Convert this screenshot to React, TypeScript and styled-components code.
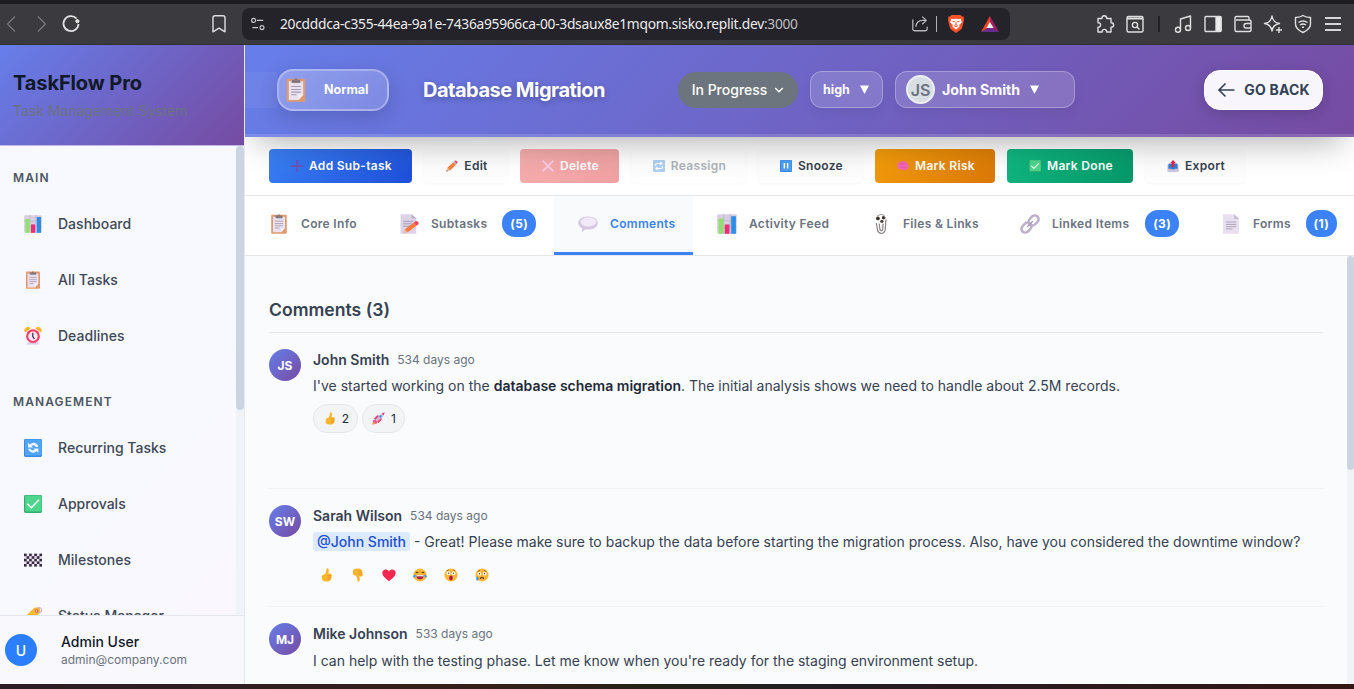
import React from "react";
import styled, { createGlobalStyle, css } from "styled-components";

const GlobalStyle = createGlobalStyle`
  * { box-sizing: border-box; }
  body { margin: 0; overflow: hidden; background: #fff; font-family: Inter, "Liberation Sans", sans-serif; }
  button { font-family: inherit; margin: 0; cursor: pointer; }
  svg { display: block; flex: none; }
  h1, h2, p { margin: 0; }
`;

/* ---------- Pictograms ---------- */

const glyphs: Record<string, React.ReactNode> = {
  clipboard: (
    <>
      <rect x="2" y="0.6" width="14" height="17.2" rx="1" fill="#e09a6c" />
      <path d="M3.6 2.4h10.8v10.2l-3.6 3.9H3.6z" fill="#e9e1f0" />
      <path d="M10.8 16.5v-3.9h3.6z" fill="#f7f2fb" />
      <path d="M5.4 6.4h7.2M5.4 8.6h7.2M5.4 10.6h7.2M5.4 12.6h4" stroke="#a89db3" strokeWidth="0.8" />
      <path d="M5.8 1.4h1.8a1.5 1.5 0 0 1 2.8 0h1.8v2.4H5.8z" fill="#83797f" />
    </>
  ),
  chart: (
    <>
      <rect x="0.2" y="0.2" width="17.6" height="17.6" rx="1" fill="#d9cfe1" />
      <path d="M6 0v18M12 0v18M0 6h18M0 12h18" stroke="#b7adc1" strokeWidth="0.6" />
      <rect x="1.4" y="4" width="4.2" height="13.8" fill="#8fe36c" />
      <rect x="7" y="9.4" width="4.2" height="8.4" fill="#ec2f74" />
      <rect x="12.8" y="2" width="4.2" height="15.8" fill="#2a8de8" />
    </>
  ),
  clock: (
    <>
      <path d="M1 5.4A3 3 0 0 1 6.6 1.6zM17 5.4a3 3 0 0 0-5.6-3.8z" fill="#fbb32c" />
      <path d="M2.6 17.6l2-3.200h8.800l2 3.200z" fill="#d9cbe9" />
      <circle cx="9" cy="9.200" r="6.900" fill="#f8406b" />
      <circle cx="9" cy="9.200" r="4.700" fill="#f8e8f6" />
      <path d="M8.800 5.800v3.800l1.600 2.200" fill="none" stroke="#35263f" strokeWidth="1.200" />
    </>
  ),
  recurring: (
    <>
      <rect width="18" height="18" rx="1.4" fill="#3b88e6" />
      <rect x="1" y="0.4" width="16.6" height="16" rx="1" fill="#51a5f6" />
      <path d="M4 3.800l1.800 1.600Q9 2.400 12.600 4.800q1.600 1.400 1.600 3.200h-2.400Q11 5.200 7.600 6.800L9 8.400H4z" fill="#eef5ff" />
      <path d="M14.400 13.800l-1.800-1.600Q9.400 15 5.800 12.600 4.400 11.400 4.200 9.800h2.400q1 2.400 4.200 1L9.400 9.400h5z" fill="#eef5ff" />
    </>
  ),
  repeat: (
    <>
      <rect width="18" height="18" rx="1.4" fill="#3b8fe8" />
      <path d="M4 9V7q0-1.8 1.8-1.8h7M11 3l2.6 2.2L11 7.4M14 9v2q0 1.8-1.8 1.8h-7M7 10.6L4.4 12.8 7 15" fill="none" stroke="#fff" strokeWidth="1.6" />
    </>
  ),
  check: (
    <>
      <rect width="18" height="18" rx="1.4" fill="#35ad70" />
      <rect x="1.2" y="0.4" width="16.4" height="16.2" rx="1" fill="#4fd58c" />
      <path d="M3.8 9.2l3.6 3.5 7.2-7.5" fill="none" stroke="#f1fff5" strokeWidth="1.6" strokeLinecap="round" />
    </>
  ),
  checkered: (
    <>
      <rect y="2.6" width="18" height="13" fill="#eee3f3" />
      {[0, 1, 2, 3, 4].map((r) =>
        [0, 1, 2, 3, 4, 5, 6].map((c) =>
          (r + c) % 2 ? null : <rect key={`${r}${c}`} x={c * 2.57} y={2.6 + r * 2.6} width="2.6" height="2.6" fill="#332b3c" />
        )
      )}
    </>
  ),
  tag: (
    <>
      <path d="M1.6 9.2L9.4 1.6q1-1 2.4-1h3q1.4 0 1.4 1.4v3.6L7.4 14.8z" fill="#fdbb2f" />
      <circle cx="12.6" cy="4" r="1.8" fill="#ef4d65" />
      <circle cx="12.4" cy="4" r="0.7" fill="#fff" />
      <path d="M13.2 1.2q4.4-1.4 4.6 1.6t-3.4 3" fill="none" stroke="#b9a6cb" strokeWidth="1" />
    </>
  ),
  plus: <path d="M9 0v18M0 9h18" stroke="#7a4bab" strokeWidth="2.200" />,
  cross: <path d="M.8.8l16.400 16.400M17.200.8L.8 17.200" stroke="#f98fd0" strokeWidth="2.400" />,
  pencil: (
    <>
      <path d="M0.6 17.4l1.6-5.6 4 4z" fill="#e8b795" />
      <path d="M2.2 11.8l8.6-8.6 4 4-8.6 8.6z" fill="#fb7f3a" />
      <path d="M10.8 3.2l1.6-1.6 4 4-1.6 1.6z" fill="#b6adc0" />
      <path d="M12.4 1.6q2-2 3.9.1t.1 3.9z" fill="#ef4658" />
      <path d="M0.6 17.4l.6-2 1.4 1.4z" fill="#43313c" />
    </>
  ),
  pause: (
    <>
      <rect width="18" height="18" rx="1.4" fill="#3384e0" />
      <rect x="1" y="0.4" width="16.6" height="16" rx="1" fill="#4d9ff2" />
      <path d="M6.6 4.6v8M11.4 4.6v8" stroke="#fff" strokeWidth="2.2" />
    </>
  ),
  brain: (
    <>
      <path d="M1.4 11Q-.6 8 2 5.4 4 1.4 8.4 2q4-1 6.4 2 3.4 2.4 2.4 6.6-.6 4-4.2 4.2L11 16.4l-2.200-2.200Q3 15.600 1.400 11z" fill="#f767b8" />
      <path d="M4 6q2-1 4 .6M8 3.6q2 1.4 1.4 3.6M12 4.6q-.8 2 1.600 3M5 10.600q3-1.600 4.600.4t4.800-.6" fill="none" stroke="#d94aa0" strokeWidth="0.900" />
    </>
  ),
  outbox: (
    <>
      <path d="M1 7h16v10.4H1z" fill="#b7a9cc" />
      <path d="M2.4 5.4h13.2v8.4H2.4z" fill="#2e7fd4" />
      <path d="M1 13h5l1.6 1.6h3L12 13h5v4.4H1z" fill="#cfc3dd" />
      <path d="M9 0l4.4 5h-2.6v6H7.2V5H4.6z" fill="#e5224f" />
    </>
  ),
  memo: (
    <>
      <path d="M1.4.2h10L15.6 4v13.8H1.4z" fill="#dcd3e6" />
      <path d="M11.4.2V4h4.2z" fill="#b9adc6" />
      <path d="M3.8 6.6h9M3.8 8.8h8M3.8 11h6" stroke="#a497b1" strokeWidth="0.8" />
      <path d="M4 17.6l1.2-3.8 2.6 2.6z" fill="#e8b795" />
      <path d="M5.2 13.8l8-6 2.4 2.8-7.8 5.8z" fill="#fb7b3c" />
      <path d="M13.2 7.8l1.6-1.2q1.4-.6 2.4.6t-.2 2.4l-1.4 1z" fill="#ef4a5e" />
    </>
  ),
  bubble: (
    <>
      <path d="M9 2.2c5 0 8.800 2.500 8.800 5.900S14 14 9 14c-.8 0-1.500-.1-2.200-.2L3.400 16.200l.4-3.400C1.600 11.700.2 10.100.2 8.100.2 4.700 4 2.200 9 2.200z" fill="#d5c6e3" />
      <ellipse cx="9.400" cy="7.200" rx="7.200" ry="4.200" fill="#f1e9f6" />
    </>
  ),
  clips: (
    <g fill="none">
      <circle cx="6.200" cy="4" r="1.700" fill="#3b3330" />
      <circle cx="11.200" cy="3.400" r="1.500" fill="#3b3330" />
      <circle cx="9.800" cy="6.600" r="1.500" fill="#4a4140" />
      <path d="M5.600 2Q8-.6 11.400.800l2 3.400" stroke="#8d8588" strokeWidth="0.800" />
      <path d="M13.400 5l-.6 9.200q-.8 3.400-3.800 3.200-2.800-.4-3.200-3.400L4.800 8.200M7.400 8.600l.6 5.200q.6 1.600 1.600 1.200t1-1.800l.2-4.600" stroke="#8d8588" strokeWidth="1.100" />
    </g>
  ),
  link: (
    <g fill="none" stroke="#bfb0cb" strokeWidth="2.300">
      <rect x="-5" y="-3.400" width="10" height="6.800" rx="3.400" transform="translate(12.200 5.800) rotate(-45)" />
      <rect x="-5" y="-3.400" width="10" height="6.800" rx="3.400" transform="translate(5.800 12.200) rotate(-45)" />
      <path d="M6.600 11.400l5-5" stroke="#a696b5" strokeWidth="1.200" />
    </g>
  ),
  page: (
    <>
      <path d="M1.800.2h10L16.200 4.400v13.400H1.800z" fill="#e8dff0" />
      <path d="M11.800.2v4.200h4.400z" fill="#c4b8d0" />
      <path d="M4.400 7.200h9.200M4.400 9.400h9.200M4.400 11.400h9.200M4.400 13.400h6" stroke="#a99cb6" strokeWidth="0.800" />
    </>
  ),
  thumb: (
    <>
      <path d="M8 7.600Q9.600 4.600 9.600 1.400q0-1.200 1.200-1 2 .4 1.800 3.200l-.6 3.600h3q1.600.4 1.200 2 .8 1.200-.2 2.400.4 1.400-.6 2.200.2 1.400-1 2-.6 1.400-2.400 1.600H8q-3.400-.4-4.200-2.600V10q.8-1.600 4.200-2.400z" fill="#fcb62e" />
      <path d="M11 9.600h4.600M11 12h4.600M11 14.300h4" stroke="#e58a28" strokeWidth="0.800" />
    </>
  ),
  rocket: (
    <>
      <path d="M2.600 9.400l4.600-5 4.200 1.200-5.400 6zM8.600 15.600l5-4.800-1.200-4.400-5.800 6z" fill="#ef3f75" />
      <path d="M4.600 11L11.400 3.400Q14.400 1 17.200.6 17 3.800 14.600 6.600L7 13.600z" fill="#cbbdda" />
      <path d="M13.600 2Q15.600.6 17.400.6q0 1.800-1.400 3.800z" fill="#ec3971" />
      <circle cx="11.800" cy="6.200" r="1.800" fill="#3f9cec" />
      <path d="M.6 17.400l1-6 3-.8 2.800 2.800-1 3z" fill="#f5568a" />
      <path d="M.6 17.400l1.800-4 2.400 2.400z" fill="#fca62e" />
    </>
  ),
  heart: <path d="M9 17C5 14 .4 10.600.4 6.200.4 1.400 6.600.2 9 4.400 11.400.2 17.600 1.400 17.600 6.200 17.600 10.600 13 14 9 17z" fill="#f5284f" />,
  joy: (
    <>
      <circle cx="9" cy="9" r="8.400" fill="#fdb733" />
      <path d="M3.600 6.400q1.400-2 3.200-.2M11.200 6.200q1.600-1.800 3.200.2" fill="none" stroke="#593428" strokeWidth="1.300" />
      <path d="M4.200 9.200h9.600q-.4 5.400-4.800 5.400T4.200 9.200z" fill="#a3224d" />
      <path d="M4.600 9.200h8.800v1.500H4.600z" fill="#fff" />
      <path d="M3.800 8.200q-3.600.2-3.800 3 1 2 2.800.4zM14.200 8.200q3.600.2 3.800 3-1 2-2.800.4z" fill="#3093ef" />
    </>
  ),
  wow: (
    <>
      <circle cx="9" cy="9" r="8.400" fill="#fdb733" />
      <path d="M3.400 3.600l3-1.200M14.600 3.600l-3-1.200" stroke="#8a4f28" strokeWidth="1" />
      <circle cx="5.800" cy="6.600" r="2.400" fill="#fff" />
      <circle cx="12.200" cy="6.600" r="2.400" fill="#fff" />
      <circle cx="5.900" cy="6.700" r="0.800" fill="#432c35" />
      <circle cx="12.100" cy="6.700" r="0.800" fill="#432c35" />
      <ellipse cx="9" cy="13" rx="2.300" ry="3.200" fill="#b0164f" />
    </>
  ),
  sad: (
    <>
      <circle cx="9" cy="9" r="8.400" fill="#fdb733" />
      <path d="M3.200 4.600l3.200-1.600M14.800 4.600l-3.200-1.600" stroke="#8a4f28" strokeWidth="1" />
      <circle cx="5.600" cy="7.400" r="2.400" fill="#fff" />
      <circle cx="12.400" cy="7.400" r="2.400" fill="#fff" />
      <circle cx="5.800" cy="7.400" r="0.900" fill="#432c35" />
      <circle cx="12.200" cy="7.400" r="0.900" fill="#432c35" />
      <path d="M6.400 13.600q2.600-2.600 5.200 0" fill="none" stroke="#6b2b2b" strokeWidth="1.500" />
      <path d="M3.200 10.600q2.600 3 1.200 5Q2.800 17 1.600 15q-.4-2 1.600-4.400z" fill="#3093ef" />
    </>
  ),
};

const Glyph = ({ name, size = 18, flip = false }: { name: string; size?: number; flip?: boolean }) => (
  <svg width={size} height={size} viewBox="0 0 18 18">
    <g transform={flip ? "matrix(1 0 0 -1 0 18)" : undefined}>{glyphs[name]}</g>
  </svg>
);

/* ---------- Browser chrome ---------- */

const Screen = styled.div`
  width: 1354px;
  height: 689px;
  display: flex;
  flex-direction: column;
  overflow: hidden;
`;

const BrowserBar = styled.div`
  height: 45px;
  flex: none;
  display: flex;
  align-items: center;
  background: #3b3a3e;
  border-top: 4px solid #1d1c21;
  border-bottom: 1px solid #302f31;
  padding: 0 11px 0 1px;
`;

const NavButtons = styled.div`
  display: flex;
  width: 241px;
  padding-right: 15px;
  align-items: center;
`;

const NavIcon = styled.span<{ $push?: boolean }>`
  width: 18px;
  margin-right: 12px;
  ${(p) => p.$push && css`margin-left: auto; margin-right: 0;`}
`;

const AddressBar = styled.div`
  width: 768px;
  height: 32px;
  border-radius: 8px;
  background: #242329;
  display: flex;
  align-items: center;
  padding: 0 11px 0 8px;
`;

const Address = styled.div`
  flex: 1;
  margin-left: 14px;
  font: 13.800px/20px "Noto Sans", sans-serif;
  letter-spacing: -0.285px;
  color: #ececee;
  white-space: nowrap;
`;

const Port = styled.span`
  color: #bdbdc2;
`;

const AddressTools = styled.div`
  display: flex;
  align-items: center;
`;

const ThinRule = styled.i`
  width: 1px;
  height: 16px;
  background: #b0b0b4;
  margin: 0 10px 0 7px;
`;

const Shields = styled.span`
  margin-right: 16px;
`;

const Extensions = styled.div`
  margin-left: auto;
  display: flex;
  align-items: center;
  gap: 10px;
`;

const DarkRule = styled.i`
  width: 2px;
  height: 16px;
  background: #222126;
  margin: 0 3px;
`;

const Line = ({ children, size = 20, color = "#e0e0e2", width = 1.4 }: { children: React.ReactNode; size?: number; color?: string; width?: number }) => (
  <svg width={size} height={size} viewBox="0 0 20 20" fill="none" stroke={color} strokeWidth={width} strokeLinejoin="round">
    {children}
  </svg>
);

const Browser = () => (
  <BrowserBar>
    <NavButtons>
      <NavIcon><Line color="#77767b"><path d="M14 2.500L6.500 10l7.500 7.500" /></Line></NavIcon>
      <NavIcon><Line color="#77767b"><path d="M7 2.500l7.500 7.500L7 17.500" /></Line></NavIcon>
      <NavIcon><Line width={1.800}><path d="M15.600 4.600A7.500 7.500 0 1 0 17.500 10" /><circle cx="16.400" cy="7.200" r="1.600" fill="#f0f0f0" strokeWidth="1" /></Line></NavIcon>
      <NavIcon $push><Line><path d="M4 3.800q0-2 2-2h8q2 0 2 2v14l-6-3.600-6 3.600z" /></Line></NavIcon>
    </NavButtons>
    <AddressBar>
      <Line size={16} color="#c8c8cc"><circle cx="4.500" cy="5.500" r="2.500" /><path d="M8.500 5.500h8M3 14.500h7" /><circle cx="15" cy="14.500" r="2.500" /></Line>
      <Address>20cdddca-c355-44ea-9a1e-7436a95966ca-00-3dsaux8e1mqom.sisko.replit.dev<Port>:3000</Port></Address>
      <AddressTools>
        <Line size={18} color="#b8b8bc"><path d="M2 5v10.500q0 2 2 2h12q2 0 2-2V13M5.500 13Q6 6 13 6h3M12.500 1.800L17 6l-4.500 4.200" /></Line>
        <ThinRule />
        <Shields>
          <svg width="18" height="20" viewBox="0 0 18 20">
            <path d="M4.500 1h9l1.500 1.600 1.600 0L17 6l-1.800 7.400q-.5 1.600-2 2.600L9 19l-4.200-3q-1.500-1-2-2.600L1 6l.4-3.400L3 2.600z" fill="#fb542b" />
            <path d="M4.200 4.800l3 .4L9 4.600l1.800.6 3-.4 1 3.600-2.600 2.400.4 1.600L9 15.600l-3.600-3.200.4-1.600L3.200 8.400z" fill="#fff" />
            <path d="M5.400 7.200l2.400.6M12.600 7.200l-2.400.6M9 8v2.600l-1.600 1.200L9 13l1.600-1.200L9 10.600" stroke="#fb542b" fill="none" strokeWidth="1" />
          </svg>
        </Shields>
        <svg width="18" height="16" viewBox="0 0 18 16">
          <path d="M9 0L0 16l9-5z" fill="#ff4724" />
          <path d="M9 0l9 16-9-5z" fill="#9e1f63" />
          <path d="M0 16h18l-9-5z" fill="#662d91" />
          <path d="M9 6l-3.600 6h7.200z" fill="#fff" />
        </svg>
      </AddressTools>
    </AddressBar>
    <Extensions>
      <Line><path d="M3 4.500h4v-.4a2.300 2.300 0 1 1 4.600 0v.4H16v4.200h.4a2.200 2.200 0 1 1 0 4.400H16V18h-4.400v-.4a2.200 2.200 0 0 0-4.400 0v.4H3v-4.900h.4a2.200 2.200 0 1 0 0-4.400H3z" /></Line>
      <Line><rect x="2" y="2.500" width="16" height="15.500" rx="1.500" /><path d="M2 4.500h16" strokeWidth="2" /><circle cx="10" cy="11" r="2.600" /><path d="M12 13l2.500 2.500" /></Line>
      <DarkRule />
      <Line><path d="M7.500 15.500V5L17.500 2v12" /><circle cx="5" cy="15.800" r="2.500" /><circle cx="15" cy="14" r="2.500" /></Line>
      <Line><rect x="2" y="2.500" width="16" height="15" rx="1" /><path d="M13 3h5v14h-5z" fill="#eee" /></Line>
      <Line><path d="M16 6V4q0-1.500-1.500-1.500h-11Q2 2.500 2 4v12q0 1.500 1.500 1.500H16q2 0 2-1.500V7.500Q18 6 16 6H3M18 9.500h-5q-2 0-2 2.300t2 2.200h5" /></Line>
      <Line><path d="M9 2q1 6.500 7.500 7.500Q10 10.500 9 17 8 10.500 1.500 9.500 8 8.500 9 2zM16 13v6M13 16h6" /></Line>
      <Line><path d="M10 1.500q3 2 7.500 2V10q0 5-7.500 8.500Q2.500 15 2.500 10V3.500q4.500 0 7.500-2zM5.500 8.500q4.500-3 9 0M7 11q3-2 6 0M9 13.200h2" /></Line>
      <Line width={1.800} color="#d6d6d8"><path d="M2 4h16M2 10h16M2 16h16" /></Line>
    </Extensions>
  </BrowserBar>
);

/* ---------- Sidebar ---------- */

const Workspace = styled.div`
  height: 639px;
  flex: none;
  display: flex;
`;

const Sidebar = styled.aside`
  width: 245px;
  flex: none;
  display: flex;
  flex-direction: column;
  border-right: 1px solid #e5e8ee;
  background: linear-gradient(135deg, #f7f9fe 0%, #f8f9fe 60%, #faf7fd 100%);
`;

const Brand = styled.div`
  height: 101px;
  flex: none;
  padding: 24px 13px 0;
  border-bottom: 1px solid #c4b6e3;
  background: linear-gradient(135deg, #667eea 0%, #764ba2 100%);
`;

const BrandName = styled.h1`
  font-size: 20px;
  line-height: 28px;
  font-weight: 700;
  letter-spacing: -0.1px;
  color: #111827;
`;

const BrandNote = styled.p`
  margin-top: 4px;
  font-size: 14px;
  line-height: 20px;
  color: #6b7280;
`;

const NavArea = styled.div`
  flex: 1;
  min-height: 0;
  display: flex;
  justify-content: space-between;
`;

const NavList = styled.nav`
  overflow: hidden;
  flex: 1;
`;

const NavHeading = styled.div`
  height: 50px;
  padding: 22px 0 0 13px;
  font-size: 12px;
  line-height: 20px;
  font-weight: 600;
  letter-spacing: 1.1px;
  color: #4b5563;
`;

const NavGroup = styled.div`
  height: 224px;
`;

const NavItem = styled.div`
  height: 56px;
  display: flex;
  align-items: center;
  gap: 16px;
  padding-left: 24px;
  font-size: 14px;
  line-height: 20px;
  font-weight: 500;
  letter-spacing: 0.02px;
  color: #3f4856;
  white-space: nowrap;
`;

const Track = styled.div<{ $w: number }>`
  width: ${(p) => p.$w}px;
  flex: none;
  background: #f0f4f9;
`;

const Thumb = styled.div<{ $h: number }>`
  height: ${(p) => p.$h}px;
  border-radius: 4px;
  background: #cbd5e1;
`;

const UserBox = styled.div`
  height: 69px;
  flex: none;
  display: flex;
  align-items: center;
  gap: 24px;
  padding-left: 5px;
  border-top: 1px solid #e4e6ee;
  background: #f8f8fd;
`;

const UserAvatar = styled.div`
  width: 32px;
  height: 32px;
  border-radius: 50%;
  display: grid;
  place-items: center;
  background: #2b7fff;
  color: #fff;
  font-size: 14px;
  font-weight: 500;
`;

const UserName = styled.div`
  font-size: 14px;
  line-height: 20px;
  font-weight: 500;
  color: #111827;
`;

const UserMail = styled.div`
  font-size: 12px;
  line-height: 16px;
  color: #6b7280;
`;

const Side = () => (
  <Sidebar>
    <Brand>
      <BrandName>TaskFlow Pro</BrandName>
      <BrandNote>Task Management System</BrandNote>
    </Brand>
    <NavArea>
      <NavList>
        <NavGroup>
          <NavHeading>MAIN</NavHeading>
          <NavItem><Glyph name="chart" />Dashboard</NavItem>
          <NavItem><Glyph name="clipboard" />All Tasks</NavItem>
          <NavItem><Glyph name="clock" />Deadlines</NavItem>
        </NavGroup>
        <NavHeading>MANAGEMENT</NavHeading>
        <NavItem><Glyph name="recurring" />Recurring Tasks</NavItem>
        <NavItem><Glyph name="check" />Approvals</NavItem>
        <NavItem><Glyph name="checkered" />Milestones</NavItem>
        <NavItem><Glyph name="tag" />Status Manager</NavItem>
      </NavList>
      <Track $w={8}><Thumb $h={264} /></Track>
    </NavArea>
    <UserBox>
      <UserAvatar>U</UserAvatar>
      <div>
        <UserName>Admin User</UserName>
        <UserMail>admin@company.com</UserMail>
      </div>
    </UserBox>
  </Sidebar>
);

/* ---------- Task header ---------- */

const Main = styled.main`
  flex: 1;
  min-width: 0;
  display: flex;
  flex-direction: column;
  overflow: hidden;
`;

const Header = styled.header`
  position: relative;
  z-index: 1;
  height: 92px;
  flex: none;
  display: flex;
  align-items: center;
  padding: 0 31px 0 0;
  border-bottom: 3px solid rgba(255, 255, 255, 0.14);
  background: linear-gradient(135deg, #667eea 0%, #764ba2 100%) border-box;
  box-shadow: 0 16px 34px -12px rgba(0, 0, 0, 0.33);
`;

const Sheen = styled.div`
  width: 32px;
  height: 36px;
  background: rgba(255, 255, 255, 0.05);
`;

const KindPill = styled.div`
  width: 112px;
  height: 42px;
  display: flex;
  align-items: center;
  gap: 16px;
  padding-left: 5px;
  border: 2px solid rgba(255, 255, 255, 0.3);
  border-radius: 16px;
  background: linear-gradient(135deg, rgba(255, 255, 255, 0.28), rgba(255, 255, 255, 0.14));
  box-shadow: 0 6px 20px rgba(0, 0, 0, 0.16);
  color: #fff;
  font-size: 12.500px;
  line-height: 18px;
  font-weight: 700;
`;

const Title = styled.h2`
  width: 255px;
  margin-left: 34px;
  font-size: 20px;
  line-height: 28px;
  font-weight: 700;
  letter-spacing: -0.5px;
  color: #fff;
  white-space: nowrap;
  text-shadow: 0 2px 6px rgba(0, 0, 0, 0.28);
`;

const StatusPill = styled.button`
  width: 120px;
  height: 36px;
  display: flex;
  align-items: center;
  justify-content: center;
  gap: 7px;
  padding: 0;
  border: 0;
  border-radius: 18px;
  background: #6c757d;
  color: #fff;
  font-size: 14px;
  font-weight: 500;
`;

const GlassPill = styled.button<{ $w: number; $size: number }>`
  width: ${(p) => p.$w}px;
  height: 37px;
  margin-left: 12px;
  display: flex;
  align-items: center;
  gap: 10px;
  padding: 0 10px 0 ${(p) => (p.$w > 100 ? 10 : 12)}px;
  border: 1px solid rgba(255, 255, 255, 0.28);
  border-radius: 12px;
  background: rgba(255, 255, 255, 0.15);
  box-shadow: 0 4px 12px rgba(0, 0, 0, 0.06);
  color: #fff;
  font-size: ${(p) => p.$size}px;
  font-weight: 700;
`;

const Assignee = styled.span`
  width: 29px;
  height: 29px;
  margin-right: -3px;
  border: 2px solid #eceff3;
  border-radius: 50%;
  display: grid;
  place-items: center;
  background: #d9dee4;
  color: #6b7280;
  font-size: 16px;
  font-weight: 600;
`;

const BackButton = styled.button`
  width: 119px;
  height: 40px;
  margin-left: auto;
  display: flex;
  align-items: center;
  justify-content: center;
  gap: 9px;
  padding: 0;
  border: 1px solid #fff;
  border-radius: 16px;
  background: #f8f6fc;
  box-shadow: 0 4px 16px rgba(0, 0, 0, 0.16);
  color: #334155;
  font-size: 14px;
  font-weight: 700;
  letter-spacing: 0.2px;
`;

const Caret = () => (
  <svg width="9" height="9" viewBox="0 0 9 9"><path d="M0 .5h9L4.500 9z" fill="#fff" /></svg>
);

const TaskHeader = () => (
  <Header>
    <Sheen />
    <KindPill><Glyph name="clipboard" size={24} />Normal</KindPill>
    <Title>Database Migration</Title>
    <StatusPill>
      In Progress
      <svg width="10" height="8" viewBox="0 0 10 8" fill="none" stroke="#fff" strokeWidth="1.500"><path d="M1.200 2L5 5.800 8.800 2" /></svg>
    </StatusPill>
    <GlassPill $w={73} $size={12.500}>high<Caret /></GlassPill>
    <GlassPill $w={180} $size={14.200}><Assignee>JS</Assignee>John Smith<Caret /></GlassPill>
    <BackButton>
      <svg width="18" height="16" viewBox="0 0 18 16" fill="none" stroke="#334155" strokeWidth="1.600"><path d="M17.500 8H2M8.500 1.500L2 8l6.500 6.500" /></svg>
      GO BACK
    </BackButton>
  </Header>
);

/* ---------- Action bar ---------- */

const Actions = styled.div`
  height: 59px;
  flex: none;
  display: flex;
  gap: 12px;
  padding: 12px 24px 0;
  border-bottom: 1px solid #e5e7eb;
  background: #fff;
`;

const tones = {
  plain: css`background: #fdfdfe; color: #374151; box-shadow: 0 1px 3px rgba(0, 0, 0, 0.035);`,
  blue: css`background: linear-gradient(135deg, #3b82f6, #1d4ed8); color: #fff;`,
  red: css`background: linear-gradient(135deg, #ef4444, #dc2626); color: #fff; opacity: 0.43;`,
  muted: css`background: #fdfdfe; color: #374151; opacity: 0.4; box-shadow: 0 1px 3px rgba(0, 0, 0, 0.04);`,
  amber: css`background: linear-gradient(135deg, #f59e0b, #d97706); color: #fff;`,
  green: css`background: linear-gradient(135deg, #10b981, #059669); color: #fff;`,
};

const Action = styled.button<{ $tone: keyof typeof tones; $w: number }>`
  width: ${(p) => p.$w}px;
  height: 34px;
  flex: none;
  display: flex;
  align-items: center;
  justify-content: center;
  gap: 6px;
  padding: 0 0 0 2px;
  border: 0;
  border-radius: 4px;
  font-size: 12px;
  line-height: 18px;
  font-weight: 600;
  letter-spacing: 0.3px;
  white-space: nowrap;
  ${(p) => tones[p.$tone]}
`;

const actions: { label: string; icon: string; tone: keyof typeof tones; w: number }[] = [
  { label: "Add Sub-task", icon: "plus", tone: "blue", w: 143 },
  { label: "Edit", icon: "pencil", tone: "plain", w: 84 },
  { label: "Delete", icon: "cross", tone: "red", w: 99 },
  { label: "Reassign", icon: "repeat", tone: "muted", w: 115 },
  { label: "Snooze", icon: "pause", tone: "plain", w: 105 },
  { label: "Mark Risk", icon: "brain", tone: "amber", w: 120 },
  { label: "Mark Done", icon: "check", tone: "green", w: 126 },
  { label: "Export", icon: "outbox", tone: "plain", w: 100 },
];

/* ---------- Tabs ---------- */

const Tabs = styled.div`
  height: 60px;
  flex: none;
  display: flex;
  border-bottom: 1px solid #e5e7eb;
  background: #fff;
`;

const Tab = styled.div<{ $w: number; $active?: boolean }>`
  width: ${(p) => p.$w}px;
  flex: none;
  display: flex;
  align-items: center;
  gap: 12px;
  padding: 0 18px 3px 24px;
  color: ${(p) => (p.$active ? "#3b82f6" : "#6b7280")};
  font-size: 12px;
  line-height: 18px;
  font-weight: 600;
  letter-spacing: 0.32px;
  white-space: nowrap;
  ${(p) => p.$active && css`background: #f8fafc; box-shadow: inset 0 -3px #3b82f6;`}
`;

const Count = styled.span`
  height: 27px;
  margin: 0 0 1px auto;
  padding: 0 8px;
  border-radius: 13px;
  background: #3b82f6;
  color: #fff;
  line-height: 27px;
  font-weight: 700;
`;

const tabs = [
  { label: "Core Info", icon: "clipboard", w: 130 },
  { label: "Subtasks", icon: "memo", w: 179, count: 5 },
  { label: "Comments", icon: "bubble", w: 139, active: true },
  { label: "Activity Feed", icon: "chart", w: 154 },
  { label: "Files & Links", icon: "clips", w: 149 },
  { label: "Linked Items", icon: "link", w: 201, count: 3 },
  { label: "Forms", icon: "page", w: 158, count: 1 },
];

/* ---------- Comments ---------- */

const Content = styled.section`
  flex: 1;
  min-height: 0;
  display: flex;
  background: #fafbfd;
`;

const Thread = styled.div`
  flex: 1;
  padding: 0 24px;
  overflow: hidden;
`;

const ThreadTitle = styled.h2`
  height: 77px;
  padding-top: 40px;
  border-bottom: 1px solid #e5e7eb;
  font-size: 17.600px;
  line-height: 28px;
  font-weight: 600;
  color: #374151;
`;

const Comment = styled.article<{ $h: number }>`
  height: ${(p) => p.$h}px;
  display: flex;
  gap: 12px;
  padding-top: 16px;
  border-bottom: 1px solid #f1f3f5;
`;

const Avatar = styled.div`
  width: 32px;
  height: 32px;
  flex: none;
  border-radius: 50%;
  display: grid;
  place-items: center;
  background: linear-gradient(135deg, #667eea, #764ba2);
  color: #fff;
  font-size: 12px;
  font-weight: 700;
`;

const Meta = styled.div`
  display: flex;
  align-items: center;
  gap: 8px;
  height: 22px;
  color: #374151;
  font-size: 14px;
  line-height: 20px;
  font-weight: 600;
`;

const When = styled.span`
  color: #6b7280;
  font-size: 12px;
  line-height: 18px;
  font-weight: 400;
`;

const Body = styled.p`
  margin-top: 3.200px;
  color: #374151;
  font-size: 14px;
  line-height: 24px;
  white-space: nowrap;

  strong { font-weight: 600; color: #1f2937; }
`;

const Mention = styled.span`
  padding: 1px 4px;
  border-radius: 3px;
  background: #dbeafe;
  color: #1d4ed8;
  font-weight: 500;
`;

const Reactions = styled.div`
  display: flex;
  gap: 4px;
  margin-top: 6px;
`;

const Reaction = styled.span<{ $w: number }>`
  width: ${(p) => p.$w}px;
  height: 29px;
  display: flex;
  align-items: center;
  justify-content: center;
  gap: 6px;
  padding-left: 1px;
  border: 1px solid #e5e7eb;
  border-radius: 14px;
  background: #f3f4f6;
  color: #1f2937;
  font-size: 12px;
`;

const Picker = styled.div`
  display: flex;
  gap: 17.300px;
  margin-top: 14px;
  padding-left: 6px;
`;

const Desktop = styled.div`
  flex: 1;
  background: linear-gradient(90deg, #2b1c26, #36201a 35%, #262217 48%, #241d24 60%, #331815);
`;

export default function App() {
  return (
    <Screen>
      <GlobalStyle />
      <Browser />
      <Workspace>
        <Side />
        <Main>
          <TaskHeader />
          <Actions>
            {actions.map((a) => (
              <Action key={a.label} $tone={a.tone} $w={a.w}><Glyph name={a.icon} size={12} />{a.label}</Action>
            ))}
          </Actions>
          <Tabs>
            {tabs.map((t) => (
              <Tab key={t.label} $w={t.w} $active={t.active}>
                <Glyph name={t.icon} size={20} />
                {t.label}
                {t.count && <Count>({t.count})</Count>}
              </Tab>
            ))}
          </Tabs>
          <Content>
            <Thread>
              <ThreadTitle>Comments (3)</ThreadTitle>
              <Comment $h={156}>
                <Avatar>JS</Avatar>
                <div>
                  <Meta>John Smith<When>534 days ago</When></Meta>
                  <Body>I've started working on the <strong>database schema migration</strong>. The initial analysis shows we need to handle about 2.5M records.</Body>
                  <Reactions>
                    <Reaction $w={45}><Glyph name="thumb" size={13} />2</Reaction>
                    <Reaction $w={43}><Glyph name="rocket" size={13} />1</Reaction>
                  </Reactions>
                </div>
              </Comment>
              <Comment $h={118.4}>
                <Avatar>SW</Avatar>
                <div>
                  <Meta>Sarah Wilson<When>534 days ago</When></Meta>
                  <Body><Mention>@John Smith</Mention> - Great! Please make sure to backup the data before starting the migration process. Also, have you considered the downtime window?</Body>
                  <Picker>
                    <Glyph name="thumb" size={14} />
                    <Glyph name="thumb" size={14} flip />
                    <Glyph name="heart" size={14} />
                    <Glyph name="joy" size={14} />
                    <Glyph name="wow" size={14} />
                    <Glyph name="sad" size={14} />
                  </Picker>
                </div>
              </Comment>
              <Comment $h={118}>
                <Avatar>MJ</Avatar>
                <div>
                  <Meta>Mike Johnson<When>533 days ago</When></Meta>
                  <Body>I can help with the testing phase. Let me know when you're ready for the staging environment setup.</Body>
                </div>
              </Comment>
            </Thread>
            <Track $w={7}><Thumb $h={214} /></Track>
          </Content>
        </Main>
      </Workspace>
      <Desktop />
    </Screen>
  );
}
